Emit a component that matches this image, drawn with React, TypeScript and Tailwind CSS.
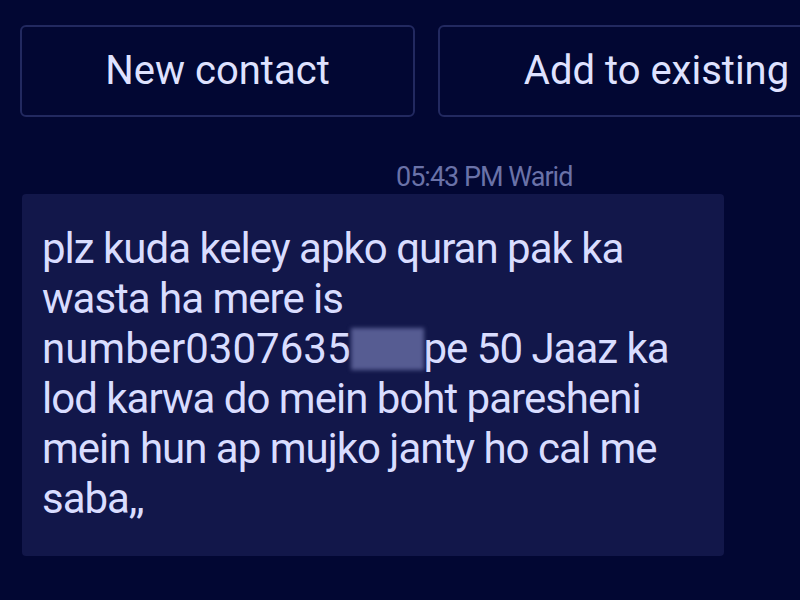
import React from "react";

export default function App() {
  return (
    <div className="w-[800px] h-[600px] overflow-hidden bg-[#020733] font-['Roboto',sans-serif]">
      <div className="flex gap-[23px] pl-[20px] pt-[25px] w-[1000px]">
        <button className="w-[395px] h-[92px] shrink-0 rounded-[6px] border-2 border-[#222960] text-[40px] text-[#dfe2ff] flex items-center justify-center">
          New contact
        </button>
        <button className="w-[437px] h-[92px] shrink-0 rounded-[6px] border-2 border-[#222960] text-[40px] text-[#dfe2ff] flex items-center justify-center">
          Add to existing
        </button>
      </div>
      <div className="pl-[396px] pt-[44px] text-[27px] leading-[33px] text-[#6a72a8] tracking-[-1px]">
        05:43 PM Warid
      </div>
      <div className="ml-[22px] w-[702px] h-[362px] rounded-[4px] bg-[#12174a] pl-[20px] pr-[20px] pt-[30px] text-[42px] leading-[50px] tracking-[-1px] text-[#d9ddff]">
        <p>plz kuda keley apko quran pak ka</p>
        <p>wasta ha mere is</p>
        <p className="flex items-center">
          <span className="tracking-normal">number0307635</span>
          <span className="inline-block w-[73px] h-[42px] bg-[#565c92] blur-[2px]" />
          pe 50 Jaaz ka
        </p>
        <p>lod karwa do mein boht paresheni</p>
        <p>mein hun ap mujko janty ho cal me</p>
        <p>saba,,</p>
      </div>
    </div>
  );
}
